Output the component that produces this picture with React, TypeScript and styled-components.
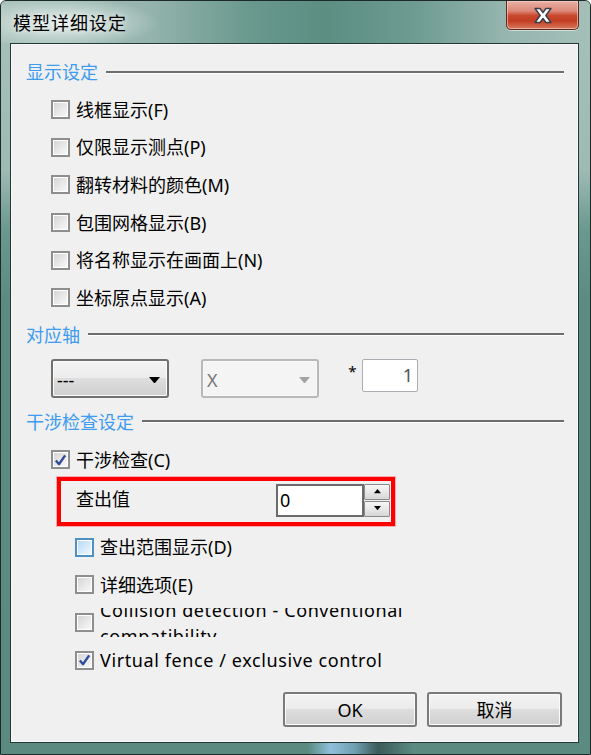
import React from 'react';
import styled, { createGlobalStyle } from 'styled-components';

const GlobalStyle = createGlobalStyle`
  html, body {
    margin: 0;
    padding: 0;
    background: #ffffff;
  }
  * {
    box-sizing: border-box;
  }
`;

const FONT = `"Noto Sans", "Noto Sans CJK SC", sans-serif`;

const Window = styled.div`
  width: 591px;
  height: 755px;
  display: flex;
  flex-direction: column;
  border: 1px solid #1d2a27;
  border-radius: 6px 6px 0 0;
  overflow: hidden;
  font-family: ${FONT};
  background:
    linear-gradient(
      90deg,
      rgba(0, 0, 0, 0) 52%,
      rgba(150, 200, 235, 0.85) 56%,
      rgba(120, 170, 200, 0.7) 60%,
      rgba(40, 60, 65, 0.6) 64%,
      rgba(0, 0, 0, 0) 70%
    ) bottom / 100% 11px no-repeat,
    linear-gradient(
      180deg,
      #a6c1ba 0px,
      #9dbab3 170px,
      #6a988e 230px,
      #5b8b81 300px,
      #5a8a80 100%
    );
`;

const TitleBar = styled.div`
  height: 42px;
  flex: none;
  display: flex;
  align-items: flex-start;
  padding-left: 12px;
  background:
    radial-gradient(ellipse 95px 26px at 62px 22px, rgba(235, 242, 240, 0.9), rgba(235, 242, 240, 0) 100%),
    linear-gradient(
      90deg,
      #a9c2bc 0%,
      #95b4ad 25%,
      #6a998e 42%,
      #5c8e82 55%,
      #6d9b91 70%,
      #97b6af 86%,
      #a3bfb8 100%
    );
`;

const TitleText = styled.div`
  margin-top: 11px;
  font-size: 18px;
  line-height: 22px;
  letter-spacing: 1px;
  color: #000;
  text-shadow: 0 0 6px rgba(255, 255, 255, 0.9);
`;

const CloseButton = styled.div`
  margin-left: auto;
  margin-right: 11px;
  width: 73px;
  height: 29px;
  display: flex;
  align-items: center;
  justify-content: center;
  border: 1px solid #5e2a22;
  border-top: none;
  border-radius: 0 0 5px 5px;
  box-shadow: inset 0 0 0 1px rgba(255, 220, 210, 0.55), 0 1px 0 rgba(255, 255, 255, 0.5);
  background: linear-gradient(
    180deg,
    #e9b0a5 0%,
    #dc8a7a 35%,
    #c9482f 52%,
    #c23c22 70%,
    #d77a5c 100%
  );
`;

const Client = styled.div`
  flex: 1;
  margin: 0 11px 11px 9px;
  border: 1px solid #263834;
  box-shadow: inset 0 0 0 1px #f7f7f7;
  background: #f0f0f0;
  display: flex;
  flex-direction: column;
  padding: 16px 14px 15px 15px;
  color: #000;
  font-size: 18px;
`;

const GroupHeader = styled.div<{ $mt: number }>`
  height: 24px;
  margin-top: ${(p) => p.$mt}px;
  display: flex;
  align-items: center;
  gap: 8px;
`;

const GroupTitle = styled.span`
  color: #3d9bf0;
  font-size: 18px;
  line-height: 24px;
  white-space: nowrap;
`;

const GroupRule = styled.div`
  flex: 1;
  height: 3px;
  border-top: 2px solid #6d6d6d;
  border-bottom: 1px solid #ffffff;
`;

const CheckList = styled.div<{ $mt: number }>`
  margin-top: ${(p) => p.$mt}px;
  display: flex;
  flex-direction: column;
`;

const CheckRow = styled.div<{ $indent?: boolean; $h?: number }>`
  height: ${(p) => p.$h ?? 37.6}px;
  display: flex;
  align-items: center;
  gap: 6px;
  padding-left: ${(p) => (p.$indent ? 49 : 25)}px;
`;

const Box = styled.div<{ $hot?: boolean }>`
  width: 19px;
  height: 19px;
  flex: none;
  display: flex;
  align-items: center;
  justify-content: center;
  border: 2px solid ${(p) => (p.$hot ? '#4f8fc2' : '#8e8e8e')};
  background: #ffffff;
  padding: 1px;
  & > div {
    width: 100%;
    height: 100%;
    display: flex;
    align-items: center;
    justify-content: center;
    background: ${(p) =>
      p.$hot
        ? 'linear-gradient(135deg, #b8daf3 0%, #d9edfb 60%, #eef7fd 100%)'
        : 'linear-gradient(135deg, #d6d6d6 0%, #e9e9e9 55%, #f7f7f7 100%)'};
  }
`;

const Label = styled.span<{ $latin?: boolean }>`
  font-size: 18px;
  line-height: 24px;
  white-space: nowrap;
  letter-spacing: ${(p) => (p.$latin ? '0.6px' : '0')};
`;

const ClippedLabel = styled.div`
  height: 29px;
  width: 340px;
  display: flex;
  align-items: center;
  overflow: hidden;
  & > span {
    flex: none;
    width: 340px;
    font-size: 18px;
    line-height: 26px;
    letter-spacing: 0.6px;
  }
`;

const AxisRow = styled.div`
  margin-top: 12px;
  height: 39px;
  display: flex;
  align-items: flex-start;
  padding-left: 25px;
`;

const Select = styled.div<{ $disabled?: boolean }>`
  width: 118px;
  height: 39px;
  margin-right: ${(p) => (p.$disabled ? 24 : 32)}px;
  display: flex;
  align-items: center;
  padding: 4px 7px 0 4px;
  border-radius: 3px;
  border: ${(p) => (p.$disabled ? '2px solid #b9b9b9' : '2px solid #707070')};
  box-shadow: inset 0 0 0 1px ${(p) => (p.$disabled ? '#f8f8f8' : '#fbfbfb')};
  color: ${(p) => (p.$disabled ? '#777777' : '#000000')};
  background: ${(p) =>
    p.$disabled
      ? '#f4f4f4'
      : 'linear-gradient(180deg, #f4f4f4 0%, #ececec 48%, #dedede 50%, #cfcfcf 100%)'};
`;

const SelectText = styled.span`
  flex: 1;
  font-size: 18px;
  line-height: 22px;
`;

const Multiplier = styled.span`
  width: 19px;
  font-size: 15px;
  line-height: 18px;
  margin-top: 3px;
  text-align: center;
`;

const ValueBox = styled.div`
  width: 56px;
  height: 33px;
  border: 1px solid #abadb3;
  border-radius: 2px;
  background: #ffffff;
  text-align: right;
  padding-right: 4px;
  font-size: 18px;
  line-height: 31px;
  color: #555555;
`;

const Highlight = styled.div`
  margin-left: 31px;
  width: 338px;
  height: 49px;
  flex: none;
  display: flex;
  align-items: center;
  justify-content: space-between;
  padding: 0 1px 0 15px;
  border: 4px solid #ff0000;
  box-shadow: 0 0 0 1px rgba(255, 90, 90, 0.45);
`;

const FieldLabel = styled.span`
  font-size: 18px;
  line-height: 24px;
  margin-top: -4px;
`;

const Spin = styled.div`
  display: flex;
  margin-bottom: 2px;
`;

const SpinInput = styled.div`
  width: 88px;
  height: 33px;
  border: 2px solid #6b6b6b;
  background: #ffffff;
  padding-left: 2px;
  font-size: 18px;
  line-height: 29px;
`;

const SpinButtons = styled.div`
  display: flex;
  flex-direction: column;
  gap: 1px;
  width: 26px;
`;

const SpinButton = styled.div`
  flex: 1;
  display: flex;
  align-items: center;
  justify-content: center;
  border: 1px solid #8a8a8a;
  border-radius: 1px;
  background: linear-gradient(180deg, #f6f6f6 0%, #e8e8e8 50%, #d6d6d6 100%);
`;

const ButtonBar = styled.div`
  margin-top: auto;
  display: flex;
  justify-content: flex-end;
  gap: 10px;
  padding-right: 2px;
`;

const DialogButton = styled.div<{ $w: number }>`
  width: ${(p) => p.$w}px;
  height: 35px;
  display: flex;
  align-items: center;
  justify-content: center;
  border: 2px solid #7a7a7a;
  border-radius: 3px;
  box-shadow: inset 0 0 0 1px #fbfbfb;
  background: linear-gradient(180deg, #f3f3f3 0%, #ebebeb 47%, #dddddd 50%, #d0d0d0 100%);
  font-size: 18px;
  line-height: 24px;
`;

const Tick = () => (
  <svg width="14" height="14" viewBox="0 0 14 14">
    <path d="M2 7.5 L5.5 11.5 L12 2" fill="none" stroke="#2f4c9c" strokeWidth="2.6" strokeLinejoin="round" />
  </svg>
);

const CheckBox: React.FC<{ checked?: boolean; hot?: boolean }> = ({ checked, hot }) => (
  <Box $hot={hot}>
    <div>{checked ? <Tick /> : null}</div>
  </Box>
);

const Arrow: React.FC<{ color: string; size?: number; up?: boolean }> = ({ color, size = 11, up }) => (
  <svg width={size} height={size * 0.6} viewBox="0 0 10 6">
    <path d={up ? 'M0 6 L5 0 L10 6 Z' : 'M0 0 L10 0 L5 6 Z'} fill={color} />
  </svg>
);

const displayItems = [
  '线框显示(F)',
  '仅限显示测点(P)',
  '翻转材料的颜色(M)',
  '包围网格显示(B)',
  '将名称显示在画面上(N)',
  '坐标原点显示(A)',
];

const App: React.FC = () => {
  return (
    <>
      <GlobalStyle />
      <Window>
        <TitleBar>
          <TitleText>模型详细设定</TitleText>
          <CloseButton>
            <svg width="22" height="17" viewBox="0 0 22 17">
              <path
                d="M3 1.5 H8 L11 5.5 L14 1.5 H19 L13.8 8.5 L19 15.5 H14 L11 11.5 L8 15.5 H3 L8.2 8.5 Z"
                fill="#ffffff"
                stroke="#3a3f4a"
                strokeWidth="1.4"
                strokeLinejoin="round"
              />
            </svg>
          </CloseButton>
        </TitleBar>
        <Client>
          <GroupHeader $mt={0}>
            <GroupTitle>显示设定</GroupTitle>
            <GroupRule />
          </GroupHeader>
          <CheckList $mt={7}>
            {displayItems.map((t) => (
              <CheckRow key={t}>
                <CheckBox />
                <Label>{t}</Label>
              </CheckRow>
            ))}
          </CheckList>

          <GroupHeader $mt={6}>
            <GroupTitle>对应轴</GroupTitle>
            <GroupRule />
          </GroupHeader>
          <AxisRow>
            <Select>
              <SelectText>---</SelectText>
              <Arrow color="#000000" />
            </Select>
            <Select $disabled>
              <SelectText>X</SelectText>
              <Arrow color="#a3a3a3" />
            </Select>
            <Multiplier>*</Multiplier>
            <ValueBox>1</ValueBox>
          </AxisRow>

          <GroupHeader $mt={12}>
            <GroupTitle>干涉检查设定</GroupTitle>
            <GroupRule />
          </GroupHeader>
          <CheckList $mt={9}>
            <CheckRow $h={34}>
              <CheckBox checked />
              <Label>干涉检查(C)</Label>
            </CheckRow>
            <Highlight>
              <FieldLabel>查出值</FieldLabel>
              <Spin>
                <SpinInput>0</SpinInput>
                <SpinButtons>
                  <SpinButton>
                    <Arrow color="#000000" size={7} up />
                  </SpinButton>
                  <SpinButton>
                    <Arrow color="#000000" size={7} />
                  </SpinButton>
                </SpinButtons>
              </Spin>
            </Highlight>
          </CheckList>
          <CheckList $mt={3}>
            <CheckRow $indent>
              <CheckBox hot />
              <Label>查出范围显示(D)</Label>
            </CheckRow>
            <CheckRow $indent>
              <CheckBox />
              <Label>详细选项(E)</Label>
            </CheckRow>
            <CheckRow $indent>
              <CheckBox />
              <ClippedLabel>
                <span>Collision detection - Conventional compatibility</span>
              </ClippedLabel>
            </CheckRow>
            <CheckRow $indent>
              <CheckBox checked />
              <Label $latin>Virtual fence / exclusive control</Label>
            </CheckRow>
          </CheckList>

          <ButtonBar>
            <DialogButton $w={134}>OK</DialogButton>
            <DialogButton $w={135}>取消</DialogButton>
          </ButtonBar>
        </Client>
      </Window>
    </>
  );
};

export default App;
